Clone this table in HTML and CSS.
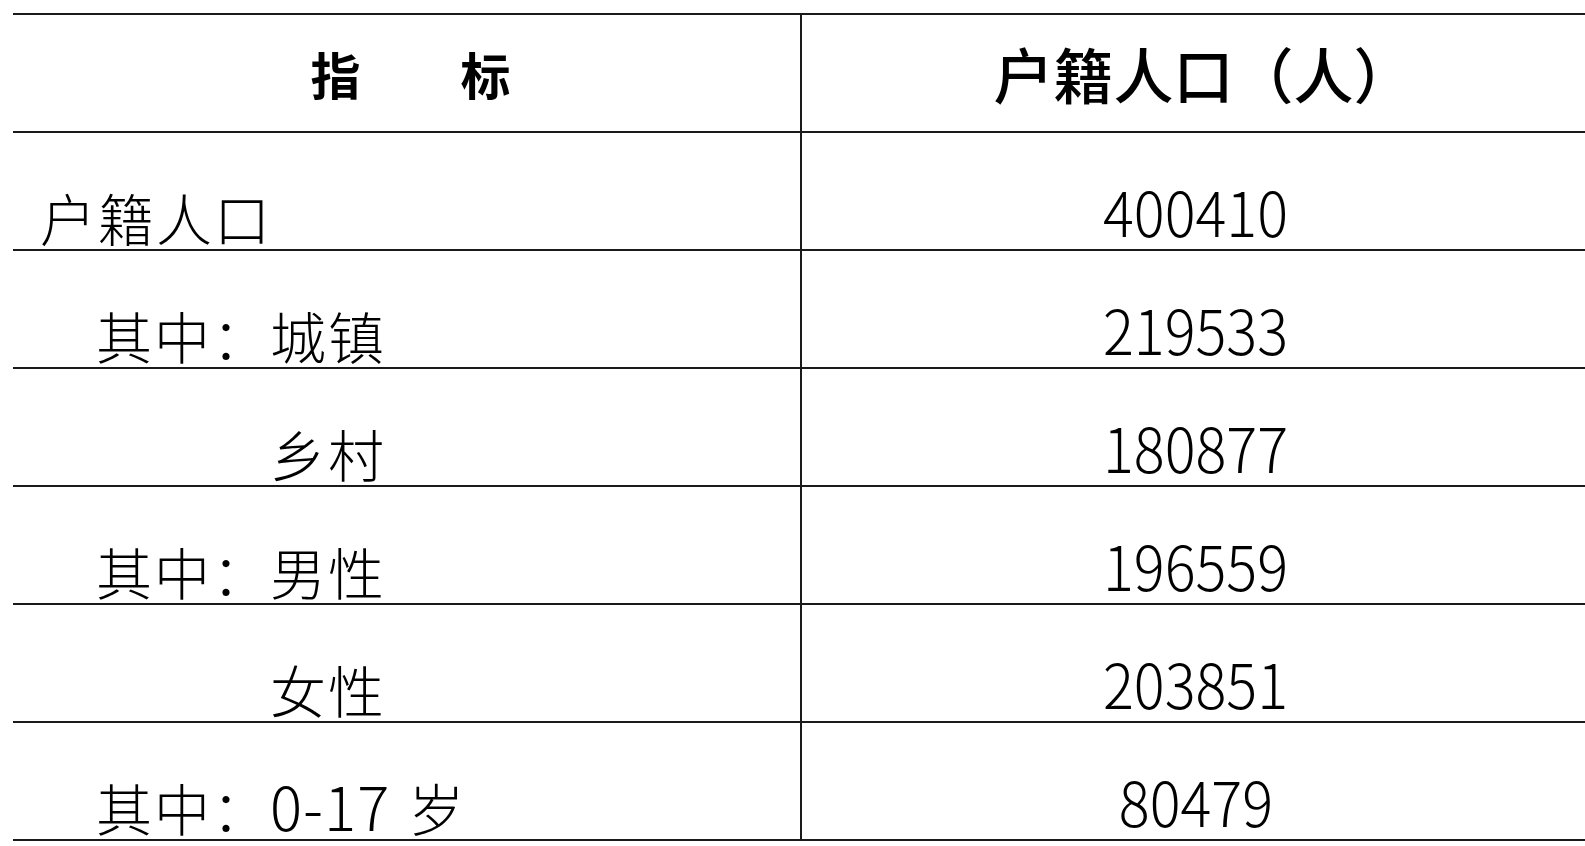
FILE: index.html
```html
<!DOCTYPE html>
<html lang="zh-CN">
<head>
<meta charset="utf-8">
<title>户籍人口</title>
<link rel="stylesheet" href="styles.css">
</head>
<body>
<table class="stats">
  <thead>
    <tr class="head-row">
      <th class="col-name">指　　标</th>
      <th class="col-value">户籍人口（人）</th>
    </tr>
  </thead>
  <tbody>
    <tr>
      <td class="name">户籍人口</td>
      <td class="value"><span class="num">400410</span></td>
    </tr>
    <tr>
      <td class="name indent">其中：城镇</td>
      <td class="value"><span class="num">219533</span></td>
    </tr>
    <tr>
      <td class="name indent">　　　乡村</td>
      <td class="value"><span class="num">180877</span></td>
    </tr>
    <tr>
      <td class="name indent">其中：男性</td>
      <td class="value"><span class="num">196559</span></td>
    </tr>
    <tr>
      <td class="name indent">　　　女性</td>
      <td class="value"><span class="num">203851</span></td>
    </tr>
    <tr>
      <td class="name indent">其中：<span class="num-inline">0-17</span>岁</td>
      <td class="value"><span class="num">80479</span></td>
    </tr>
  </tbody>
</table>
</body>
</html>
```

FILE: styles.css
```css
html, body {
  margin: 0;
  padding: 0;
  background: #ffffff;
  overflow: hidden;
}

body {
  padding: 13px 0 0 13px;
  font-family: "Noto Sans CJK SC", "Noto Sans", sans-serif;
  color: #000;
}

.stats {
  border-collapse: collapse;
  width: 1580px;
  table-layout: fixed;
}

.stats th,
.stats td {
  padding: 0;
  border-top: 2px solid #1a1a1a;
  border-bottom: 2px solid #1a1a1a;
}

.col-name {
  width: 779px;
  border-right: 2px solid #1a1a1a;
}

.head-row th {
  height: 116px;
  font-size: 50px;
  font-weight: 700;
  text-align: center;
  vertical-align: middle;
  line-height: 1;
}

.head-row .col-name {
  padding-left: 8px;
}

.head-row .col-value {
  font-size: 60px;
  font-weight: 500;
  letter-spacing: 0;
  padding-left: 12px;
}

.stats tbody td {
  vertical-align: bottom;
  line-height: 1;
}

.stats td.name {
  height: 112px;
  border-right: 2px solid #1a1a1a;
  font-size: 56px;
  font-weight: 300;
  letter-spacing: 2px;
  padding-left: 27px;
  padding-bottom: 4px;
  white-space: pre;
}

.stats td.name.indent {
  padding-left: 83px;
}

.num-inline {
  display: inline-block;
  font-size: 60px;
  font-weight: 300;
  letter-spacing: 1px;
  margin-right: 18px;
}

.stats td.value {
  height: 108px;
  text-align: center;
  padding-bottom: 8px;
  padding-right: 4px;
}

.num {
  display: inline-block;
  font-size: 62px;
  font-weight: 300;
  line-height: 1;
  transform: scaleX(0.93);
}
```
